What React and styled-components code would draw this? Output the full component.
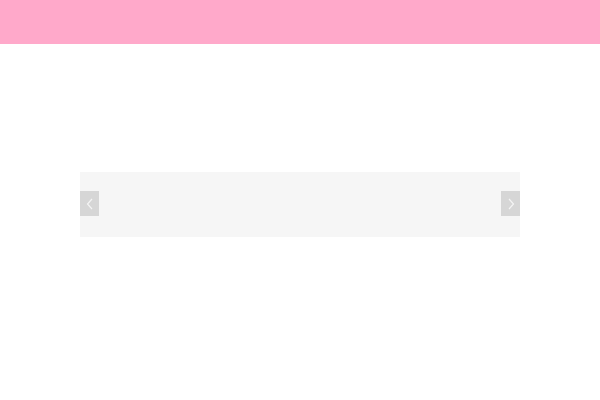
import React from "react";
import styled, { createGlobalStyle } from "styled-components";

const Global = createGlobalStyle`
  html, body { margin: 0; padding: 0; background: #fff; font-family: "Liberation Sans", Arial, sans-serif; }
`;

const Header = styled.header`
  height: 44px;
  background: #ffa9ca;
`;

const Main = styled.main`
  padding: 128px 80px 0;
`;

const Carousel = styled.div`
  height: 65px;
  background: #f6f6f6;
  display: flex;
  align-items: center;
  justify-content: space-between;
`;

const Arrow = styled.button`
  width: 19px;
  height: 25px;
  margin-bottom: 2px;
  padding: 0;
  border: none;
  background: #d6d6d6;
  display: flex;
  align-items: center;
  justify-content: center;
  cursor: pointer;
`;

const Chevron = ({ dir }) => (
  <svg width="8" height="12" viewBox="0 0 8 12">
    <path
      d={dir === "left" ? "M6 1 L1.5 6 L6 11" : "M2 1 L6.5 6 L2 11"}
      fill="none"
      stroke="#f4f4f4"
      strokeWidth="1.2"
    />
  </svg>
);

export default function App() {
  return (
    <>
      <Global />
      <Header />
      <Main>
        <Carousel>
          <Arrow aria-label="Previous"><Chevron dir="left" /></Arrow>
          <Arrow aria-label="Next"><Chevron dir="right" /></Arrow>
        </Carousel>
      </Main>
    </>
  );
}
